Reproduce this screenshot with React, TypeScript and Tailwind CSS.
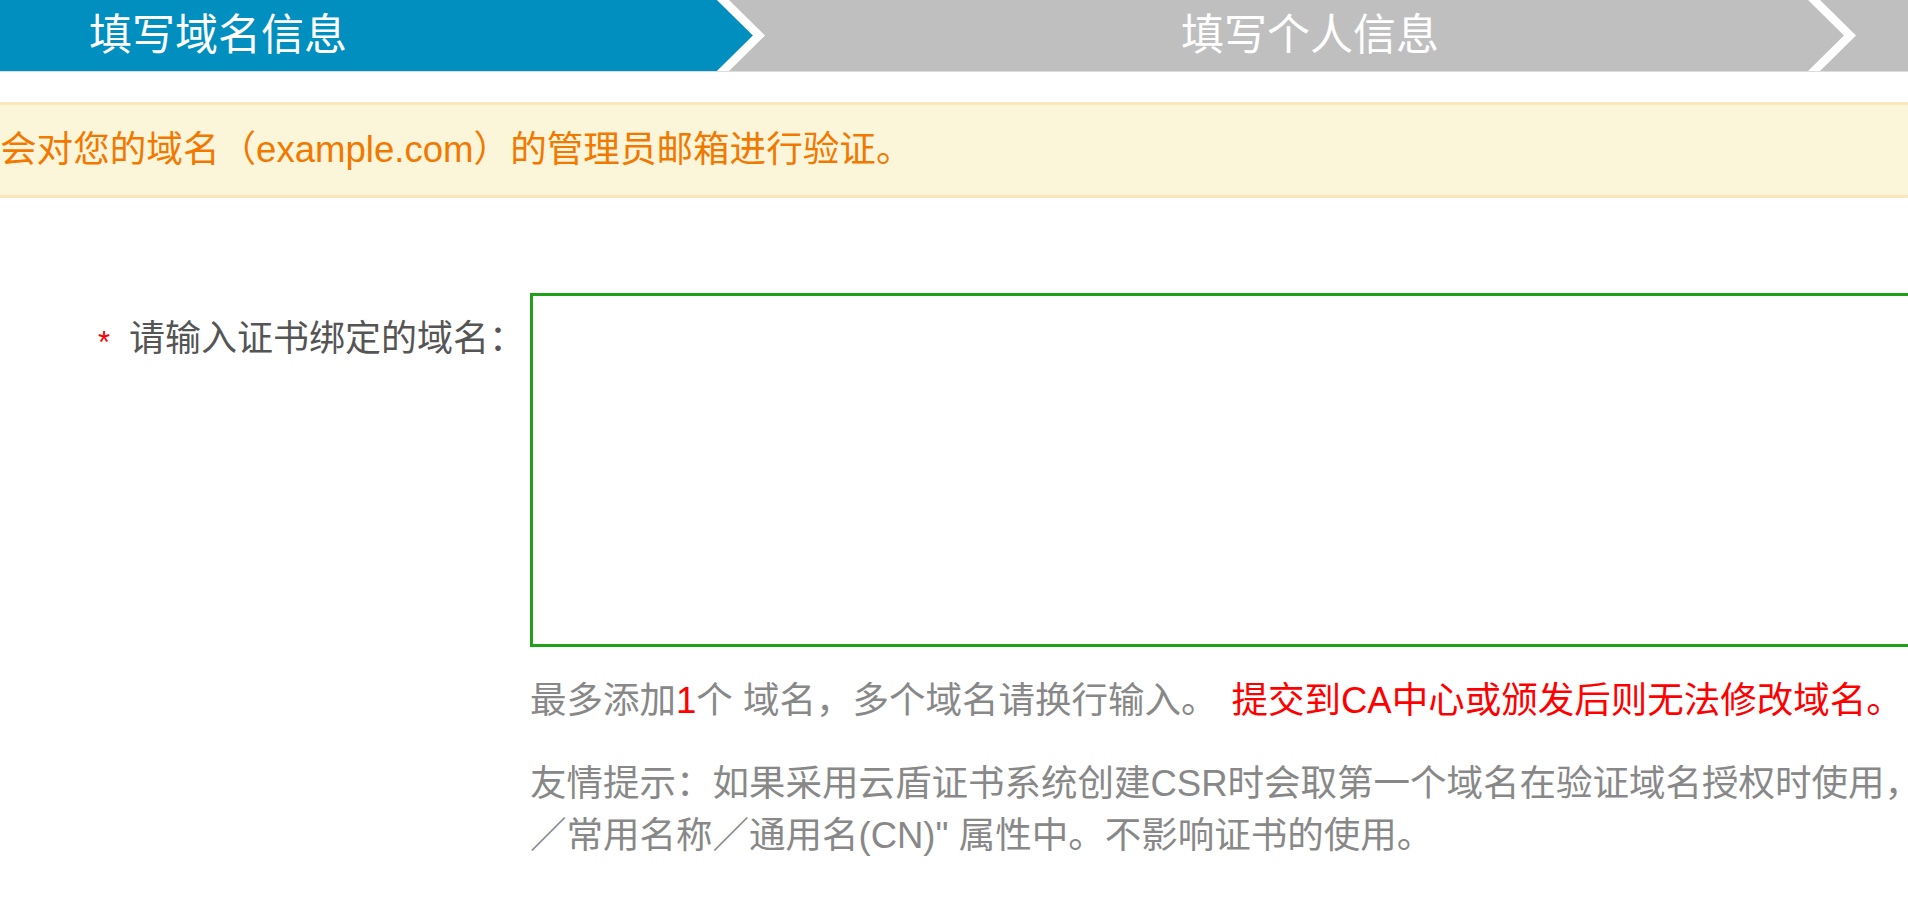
import React from 'react';

// Step arrow between two segments of the wizard bar
const StepArrow: React.FC<{ left: string; right: string }> = ({ left, right }) => (
  <svg width="48" height="71" viewBox="0 0 48 71" className="block shrink-0">
    <rect x="0" y="0" width="48" height="71" fill={right} />
    <polygon points="0,0 36,35.5 0,71" fill={left} />
    <polygon points="0,0 12,0 48,35.5 12,71 0,71 36,35.5" fill="#ffffff" />
  </svg>
);

const App: React.FC = () => {
  return (
    <div className="w-[1908px] h-[898px] overflow-hidden bg-white font-['Liberation_Sans','Noto_Sans_CJK_SC',sans-serif]">
      {/* Wizard steps */}
      <div className="flex h-[71px]">
        <div className="w-[717px] shrink-0 bg-[#018fbf] pl-[89px] text-[43px] leading-[71px] text-white">
          填写域名信息
        </div>
        <StepArrow left="#018fbf" right="#bfbfbf" />
        <div className="w-[1043px] shrink-0 bg-[#bfbfbf] pl-[47px] text-center text-[43px] leading-[71px] text-white">
          填写个人信息
        </div>
        <StepArrow left="#bfbfbf" right="#bfbfbf" />
        <div className="flex-1 bg-[#bfbfbf]" />
      </div>
      <div className="h-px bg-[#dcdcdc]" />

      {/* Notice */}
      <div className="mt-[30px] flex h-[96px] items-center border-y-[3px] border-[#fae7be] bg-[#fbf6da] whitespace-nowrap text-[36.6px] text-[#f37800]">
        会对您的域名（example.com）的管理员邮箱进行验证。
      </div>

      {/* Domain form row */}
      <div className="mt-[95px] flex">
        <div className="w-[530px] shrink-0 pt-[17px] pr-[5px] text-right text-[36px] leading-[58px] text-[#555555]">
          <span className="relative top-[2px] mr-[19px] text-[31px] text-[#ff0000]">*</span>
          请输入证书绑定的域名：
        </div>
        <div className="w-[1500px] shrink-0">
          <textarea className="block h-[354px] w-[1500px] resize-none border-[3px] border-[#1fa21a] bg-white outline-none" />
          <div className="mt-[28px] whitespace-nowrap text-[36.5px] leading-[52px] text-[#888888]">
            最多添加<span className="text-[#ff0000]">1</span>个 域名，多个域名请换行输入。
            <span className="ml-[14px] text-[#ff0000]">提交到CA中心或颁发后则无法修改域名。</span>
          </div>
          <div className="mt-[31px] whitespace-nowrap text-[36.5px] leading-[52px] text-[#888888]">
            <div>友情提示：如果采用云盾证书系统创建CSR时会取第一个域名在验证域名授权时使用，</div>
            <div>{'／常用名称／通用名(CN)" 属性中。不影响证书的使用。'}</div>
          </div>
        </div>
      </div>
    </div>
  );
};

export default App;
